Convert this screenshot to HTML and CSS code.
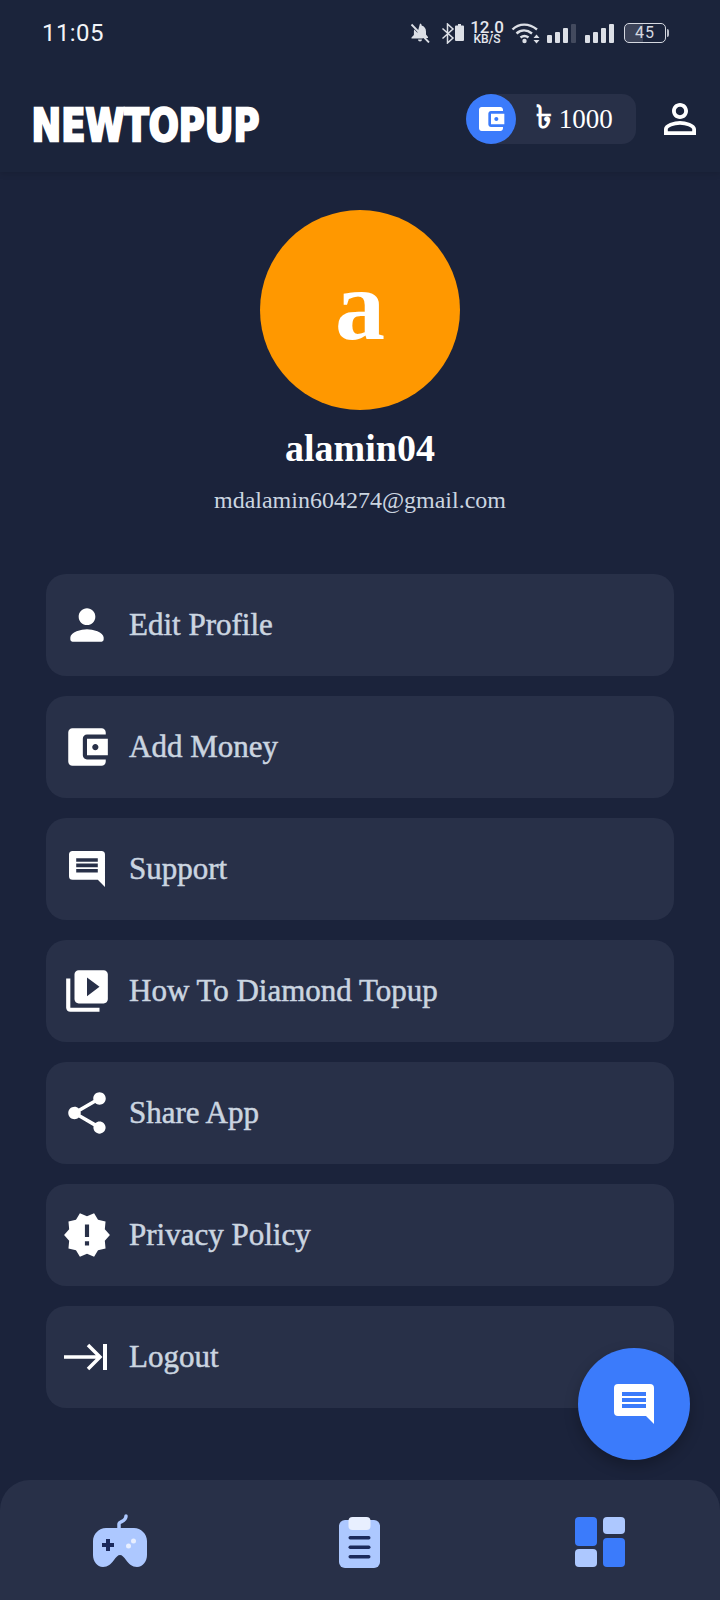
FILE: index.html
```html
<!DOCTYPE html>
<html lang="en">
<head>
<meta charset="utf-8">
<title>Profile</title>
<link rel="stylesheet" href="styles.css">
</head>
<body>
<div class="app">
  <header class="header">
    <div class="status">
      <span class="time">11:05</span>
      <div class="status-icons">
        <svg class="st-bell" viewBox="0 0 20 20"><path fill="#dcdfe6" d="M10 0.5a1.6 1.6 0 0 1 1.6 1.6v.5c2.8.7 4.4 3 4.4 5.9v3l2 2.5v1H6zM4.2 6.6 13 15.5H1.5v-1l2.4-2.5V8.500c0-.7.1-1.300.3-1.900zM8 16.500h4a2 2 0 0 1-4 0z"/><path stroke="#dcdfe6" stroke-width="1.800" d="M1.500 1.500 19 19.500"/></svg>
        <svg class="st-bt" viewBox="0 0 24 21"><path fill="none" stroke="#dcdfe6" stroke-width="1.500" d="M1.500 5.500 12 15l-5.500 5V1L12 6 1.500 15.500"/><path fill="#dcdfe6" d="M17 1h3v1.500h2a1 1 0 0 1 1 1V17a1 1 0 0 1-1 1h-7a1 1 0 0 1-1-1V3.500a1 1 0 0 1 1-1h2z"/></svg>
        <div class="speed"><span class="speed-n">12.0</span><span class="speed-u">KB/S</span></div>
        <svg class="st-wifi" viewBox="0 0 29 22"><g fill="none" stroke="#dcdfe6" stroke-width="2.400"><path d="M1.500 7.500C8 1 18 1 26 7.500"/><path d="M5.500 11.500c4.500-4 10.500-4 15.500 0"/><path d="M9.500 15.500c2.500-2 5.500-2 8 0"/></g><circle cx="13.500" cy="19" r="2.200" fill="#dcdfe6"/><path fill="#dcdfe6" d="M25.500 12.500 28.500 16h-6zM22.500 18h6l-3 3.500z"/></svg>
        <svg class="st-sig" viewBox="0 0 29 20"><rect y="12" width="5" height="8" rx="1" fill="#dcdfe6"/><rect x="8" y="9" width="5" height="11" rx="1" fill="#dcdfe6"/><rect x="16" y="5" width="5" height="15" rx="1" fill="#dcdfe6"/><rect x="24" y="1" width="5" height="19" rx="1" fill="#434a5e"/></svg>
        <svg class="st-sig" viewBox="0 0 29 20"><rect y="12" width="5" height="8" rx="1" fill="#dcdfe6"/><rect x="8" y="9" width="5" height="11" rx="1" fill="#dcdfe6"/><rect x="16" y="5" width="5" height="15" rx="1" fill="#dcdfe6"/><rect x="24" y="1" width="5" height="19" rx="1" fill="#dcdfe6"/></svg>
        <div class="batt"><div class="batt-body"><span class="batt-n">45</span></div><div class="batt-cap"></div></div>
      </div>
    </div>
    <div class="bar">
      <svg class="logo" viewBox="0 0 288 56" preserveAspectRatio="none"><text class="logo-text" x="2" y="45">NEWTOPUP</text></svg>
      <div class="bar-right">
        <div class="chip">
          <span class="chip-ic"><svg class="ic-chip" viewBox="0 0 24 24"><path fill="#fff" d="M21 18v1c0 1.100-.9 2-2 2H5c-1.110 0-2-.9-2-2V5c0-1.100.89-2 2-2h14c1.100 0 2 .9 2 2v1h-9c-1.110 0-2 .9-2 2v8c0 1.100.89 2 2 2h9zm-9-2h10V8H12v8zm4-2.500c-.83 0-1.500-.67-1.500-1.500s.67-1.500 1.500-1.500 1.500.67 1.500 1.500-.67 1.500-1.500 1.500z"/></svg></span>
          <span class="chip-text"><span class="taka">৳</span> 1000</span>
        </div>
        <svg class="ic-user" viewBox="0 0 24 24"><path fill="#fff" d="M12 5.900c1.160 0 2.100.94 2.100 2.100s-.94 2.100-2.100 2.100S9.900 9.160 9.900 8s.94-2.100 2.100-2.100m0 9c2.970 0 6.100 1.460 6.100 2.100v1.100H5.900V17c0-.64 3.130-2.100 6.100-2.100M12 4C9.790 4 8 5.790 8 8s1.790 4 4 4 4-1.790 4-4-1.790-4-4-4zm0 9c-2.670 0-8 1.340-8 4v3h16v-3c0-2.660-5.330-4-8-4z"/></svg>
      </div>
    </div>
  </header>

  <main class="main">
    <div class="avatar">a</div>
    <div class="name">alamin04</div>
    <div class="email">mdalamin604274@gmail.com</div>
    <div class="menu">
      <div class="item"><svg class="ic" viewBox="0 0 24 24"><path d="M12 12c2.210 0 4-1.790 4-4s-1.790-4-4-4-4 1.790-4 4 1.790 4 4 4zm0 2c-2.670 0-8 1.340-8 4v1a1 1 0 0 0 1 1h14a1 1 0 0 0 1-1v-1c0-2.660-5.330-4-8-4z"/></svg><span class="label">Edit Profile</span></div>
      <div class="item"><svg class="ic" viewBox="0 0 24 24"><path d="M21 18v1c0 1.100-.9 2-2 2H5c-1.110 0-2-.9-2-2V5c0-1.100.89-2 2-2h14c1.100 0 2 .9 2 2v1h-9c-1.110 0-2 .9-2 2v8c0 1.100.89 2 2 2h9zm-9-2h10V8H12v8zm4-2.500c-.83 0-1.500-.67-1.500-1.500s.67-1.500 1.500-1.500 1.500.67 1.500 1.500-.67 1.500-1.500 1.500z"/></svg><span class="label">Add Money</span></div>
      <div class="item"><svg class="ic" viewBox="-1.900 -1.900 27.800 27.800"><path fill-rule="evenodd" d="M4 2h16a2 2 0 0 1 2 2v18l-4-4H4a2 2 0 0 1-2-2V4a2 2 0 0 1 2-2zm2 4v2h12V6zm0 3v2h12V9zm0 3v2h12v-2z"/></svg><span class="label">Support</span></div>
      <div class="item"><svg class="ic" viewBox="0 0 24 24"><path d="M4 6H2v14c0 1.100.9 2 2 2h14v-2H4V6zm16-4H8c-1.100 0-2 .9-2 2v12c0 1.100.9 2 2 2h12c1.100 0 2-.9 2-2V4c0-1.100-.9-2-2-2zm-8 12.500v-9l6 4.500-6 4.500z"/></svg><span class="label">How To Diamond Topup</span></div>
      <div class="item"><svg class="ic" viewBox="0 0 24 24"><path d="M18 16.080c-.76 0-1.440.3-1.960.77L8.910 12.700c.05-.23.09-.46.09-.7s-.04-.47-.09-.7l7.050-4.110c.54.5 1.250.81 2.040.81 1.660 0 3-1.340 3-3s-1.340-3-3-3-3 1.340-3 3c0 .24.04.47.09.7L8.040 9.810C7.500 9.310 6.790 9 6 9c-1.660 0-3 1.340-3 3s1.340 3 3 3c.79 0 1.500-.31 2.040-.81l7.120 4.160c-.05.21-.08.43-.08.65 0 1.610 1.310 2.920 2.920 2.920s2.920-1.310 2.920-2.920-1.310-2.920-2.920-2.920z"/></svg><span class="label">Share App</span></div>
      <div class="item"><svg class="ic" viewBox="0 0 24 24"><path d="M23 12l-2.440-2.780.34-3.680-3.610-.82-1.890-3.180L12 3 8.600 1.540 6.710 4.720l-3.610.81.34 3.680L1 12l2.440 2.780-.34 3.690 3.610.82 1.890 3.180L12 21l3.400 1.460 1.890-3.180 3.610-.82-.34-3.680L23 12zm-10 5h-2v-2h2v2zm0-4h-2V7h2v6z"/></svg><span class="label">Privacy Policy</span></div>
      <div class="item"><svg class="ic" viewBox="0 0 50 50"><path class="ic-stroke" d="M2 25h36M26 13l12 12-12 12"/><rect x="41" y="12" width="4" height="26"/></svg><span class="label">Logout</span></div>
    </div>
  </main>

  <nav class="nav">
    <svg class="nav-ic" viewBox="0 0 54 54"><path fill="none" stroke="#adc8ff" stroke-width="3.500" stroke-linecap="round" d="M26 16v-5c0-3 7-2 7-8"/><path fill="#adc8ff" d="M13 15h28c7 0 13 6 13 13v14c0 6-4 12-10 12-5 0-8-3-11-7-2-3-4-5-6-5s-4 2-6 5c-3 4-6 7-11 7-6 0-10-6-10-12V28c0-7 6-13 13-13z"/><path fill="#1b2a5c" d="M13 26h4v4h4v4h-4v4h-4v-4H9v-4h4z"/><circle cx="40.500" cy="28" r="2.500" fill="#e8efff"/><circle cx="35.500" cy="33" r="2.500" fill="#e8efff"/></svg>
    <svg class="nav-ic nav-clip" viewBox="0 0 42 52"><rect y="3" width="41" height="48" rx="6" fill="#adc8ff"/><rect x="9.500" y="0" width="22" height="13" rx="4" fill="#e8efff"/><rect x="9.500" y="19" width="22" height="3.500" rx="1.700" fill="#1b2a5c"/><rect x="9.500" y="28.500" width="22" height="3.500" rx="1.700" fill="#1b2a5c"/><rect x="9.500" y="38" width="22" height="3.500" rx="1.700" fill="#1b2a5c"/></svg>
    <svg class="nav-ic nav-dash" viewBox="0 0 50 50"><rect width="22" height="29" rx="4" fill="#3b7bfb"/><rect x="28" width="22" height="17" rx="4" fill="#adc8ff"/><rect y="32" width="22" height="18" rx="4" fill="#adc8ff"/><rect x="28" y="21" width="22" height="29" rx="4" fill="#3b7bfb"/></svg>
  </nav>

  <div class="fab"><svg class="fab-ic" viewBox="0 0 24 24"><path fill="#fff" fill-rule="evenodd" d="M4 2h16a2 2 0 0 1 2 2v18l-4-4H4a2 2 0 0 1-2-2V4a2 2 0 0 1 2-2zm2 4v2h12V6zm0 3v2h12V9zm0 3v2h12v-2z"/></svg></div>
</div>
</body>
</html>
```
FILE: styles.css
```css
* { box-sizing: border-box; }
html, body { margin: 0; padding: 0; }
body { background: #1b233b; }
.app {
  position: relative;
  width: 720px;
  height: 1600px;
  overflow: hidden;
  display: flex;
  flex-direction: column;
  background: #1b233b;
  font-family: "Liberation Serif", serif;
}
.header {
  height: 172px;
  flex: none;
  background: #1b243b;
  box-shadow: 0 2px 6px rgba(0, 0, 0, .12);
}
.status {
  height: 66px;
  padding: 0 0 0 42px;
  display: flex;
  justify-content: space-between;
  align-items: center;
}
.time {
  font: 400 24px/1 Roboto, sans-serif;
  color: #f2f4f8;
  letter-spacing: .4px;
}
.status-icons {
  display: flex;
  align-items: center;
  width: 310px;
}
.st-bell { width: 20px; height: 20px; margin-right: 11px; }
.st-bt { width: 24px; height: 21px; margin-right: 6px; }
.speed { width: 32px; display: flex; flex-direction: column; align-items: center; color: #e6e8ee; font-family: Roboto, sans-serif; font-weight: 500; margin-right: 8px; }
.speed-n { font-size: 17px; line-height: 13px; }
.speed-u { font-size: 12px; line-height: 11px; font-weight: 500; }
.st-wifi { width: 29px; height: 22px; margin-right: 7px; }
.st-sig { width: 29px; height: 20px; margin-right: 9px; }
.batt { display: flex; align-items: center; margin-left: 1px; }
.batt-body {
  width: 42px; height: 20px;
  border: 1.500px solid #d5d8e0;
  border-radius: 5px;
  display: flex; align-items: center; justify-content: center;
  background: linear-gradient(90deg, #3c4358 45%, transparent 45%);
}
.batt-n { font: 400 16px/1 Roboto, sans-serif; color: #d5d8e0; letter-spacing: 1px; }
.batt-cap { width: 2px; height: 8px; background: #b9bdc8; border-radius: 0 2px 2px 0; margin-left: 1px; }
.bar {
  height: 106px;
  padding: 0 16px 0 30px;
  display: flex;
  align-items: center;
  justify-content: space-between;
}
.logo { width: 232px; height: 56px; margin-top: 10px; }
.logo-text {
  font-family: "DejaVu Sans", sans-serif;
  font-weight: 700;
  font-size: 44px;
  fill: #fff;
  stroke: #fff;
  stroke-width: 2.500px;
  stroke-linejoin: miter;
}
.bar-right { display: flex; align-items: center; gap: 20px; }
.chip {
  width: 170px; height: 50px;
  display: flex; align-items: center;
  background: #283048;
  border-radius: 25px 14px 14px 25px;
}
.chip-ic {
  width: 50px; height: 50px;
  border-radius: 50%;
  background: #3b7bfb;
  display: flex; align-items: center; justify-content: center;
  flex: none;
}
.ic-chip { width: 32px; height: 32px; }
.chip-text { margin-left: 20px; font-size: 27px; color: #fff; white-space: nowrap; }
.taka { font-size: 32px; font-weight: 700; }
.ic-user { width: 48px; height: 48px; flex: none; }

.main {
  flex: 1;
  display: flex;
  flex-direction: column;
  align-items: center;
  padding-top: 38px;
}
.avatar {
  width: 200px; height: 200px;
  border-radius: 50%;
  background: #ff9800;
  color: #fff;
  font-size: 100px;
  font-weight: 700;
  padding-bottom: 10px;
  display: flex; align-items: center; justify-content: center;
  flex: none;
}
.name {
  margin-top: 14px;
  font-size: 38px;
  line-height: 48px;
  font-weight: 700;
  color: #fff;
}
.email {
  margin-top: 13px;
  font-size: 24px;
  line-height: 30px;
  color: #cbd5e0;
}
.menu {
  margin-top: 59px;
  width: 628px;
  display: flex;
  flex-direction: column;
  gap: 20px;
}
.item {
  height: 102px;
  padding-left: 16px;
  display: flex;
  align-items: center;
  gap: 17px;
  background: #283048;
  border-radius: 20px;
}
.ic { width: 50px; height: 50px; flex: none; fill: #fff; }
.ic-stroke { fill: none; stroke: #fff; stroke-width: 3.500; }
.label { font-size: 31px; color: #cbd5e0; -webkit-text-stroke: .5px #cbd5e0; }

.nav {
  height: 120px;
  flex: none;
  display: grid;
  grid-template-columns: repeat(3, 240px);
  justify-items: center;
  align-items: start;
  padding-top: 33px;
  background: #283048;
  border-radius: 30px 30px 0 0;
}
.nav-ic { width: 54px; height: 54px; }
.nav-clip { width: 42px; height: 52px; margin-top: 4px; }
.nav-dash { width: 50px; height: 50px; margin-top: 4px; }

.fab {
  position: absolute;
  left: 578px;
  top: 1348px;
  width: 112px; height: 112px;
  border-radius: 50%;
  background: #3b7bfb;
  box-shadow: 0 6px 14px rgba(0, 0, 0, .25);
  display: flex; align-items: center; justify-content: center;
}
.fab-ic { width: 48px; height: 48px; }
```
